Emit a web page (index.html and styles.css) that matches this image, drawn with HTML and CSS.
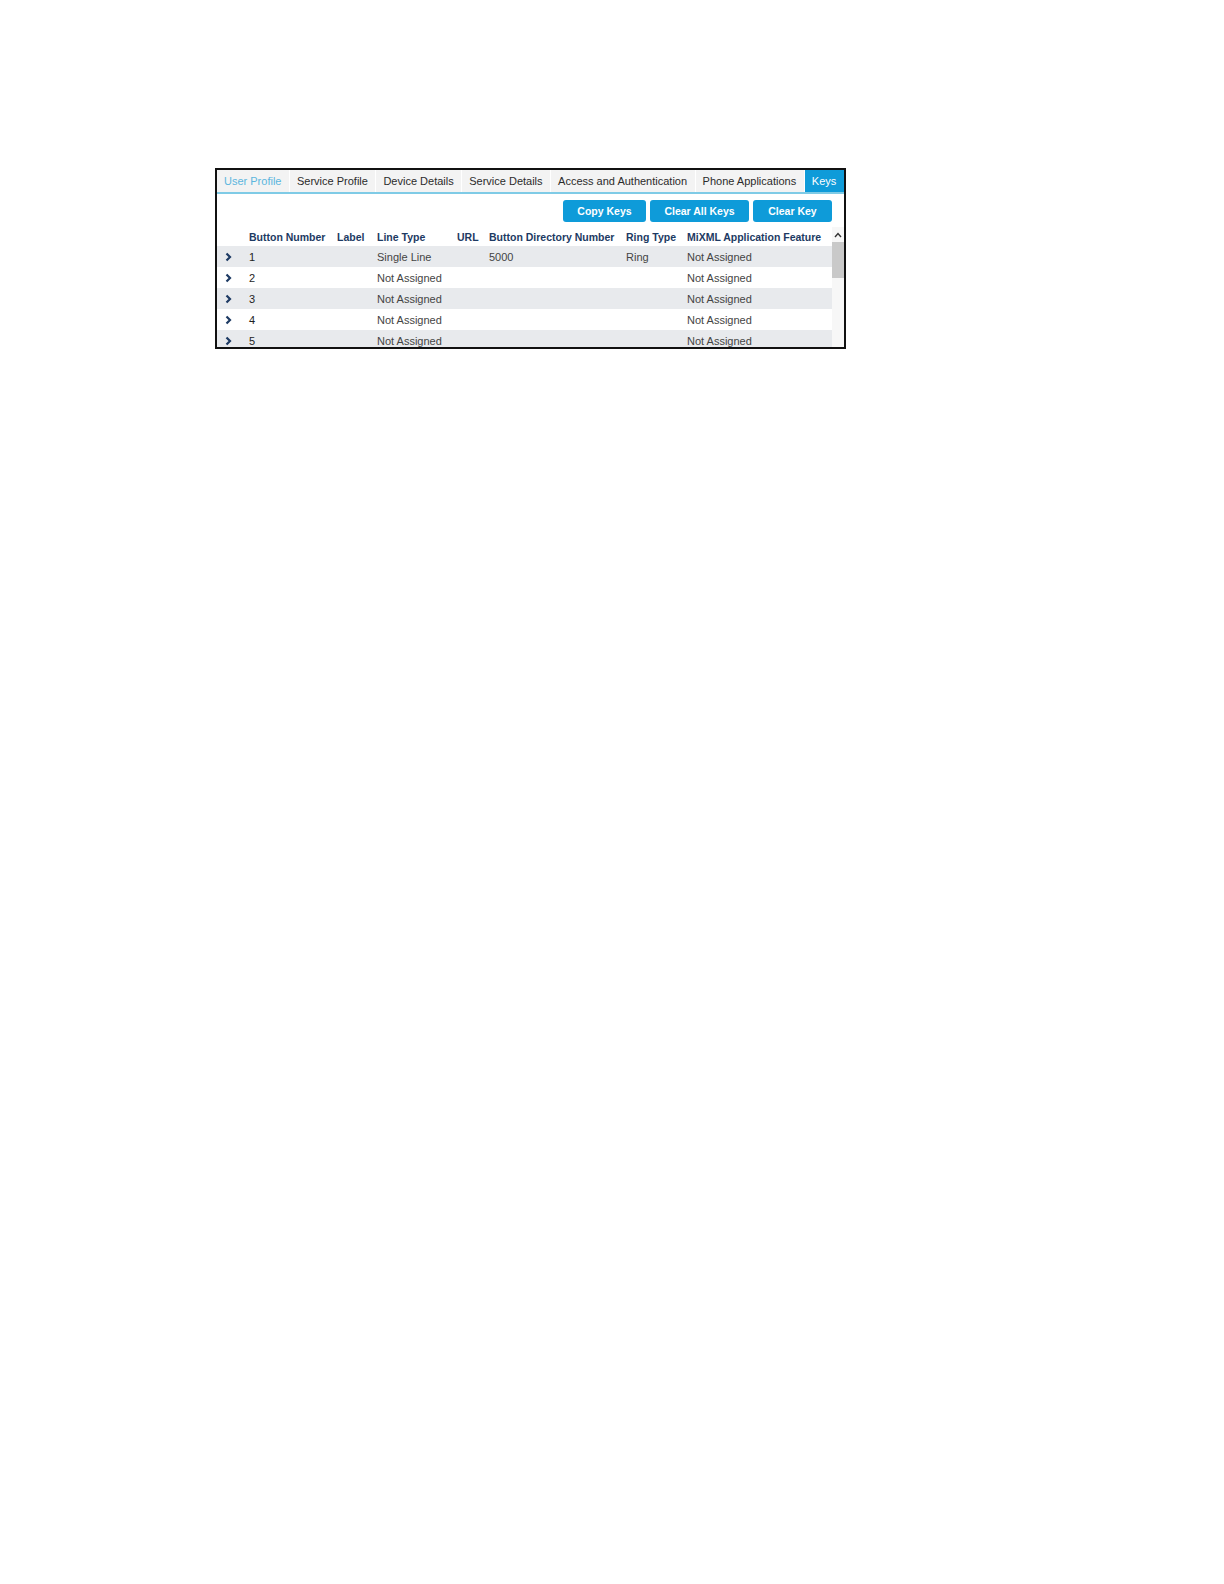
FILE: index.html
```html
<!DOCTYPE html>
<html lang="en">
<head>
<meta charset="utf-8">
<title>Keys</title>
<link rel="stylesheet" href="styles.css">
</head>
<body>
<div class="page">
  <div class="frame">
    <div class="tabs">
      <div class="tab tab-muted">User Profile</div>
      <div class="tab">Service Profile</div>
      <div class="tab">Device Details</div>
      <div class="tab">Service Details</div>
      <div class="tab">Access and Authentication</div>
      <div class="tab">Phone Applications</div>
      <div class="tab tab-active">Keys</div>
    </div>
    <div class="toolbar">
      <button class="btn">Copy Keys</button>
      <button class="btn">Clear All Keys</button>
      <button class="btn">Clear Key</button>
    </div>
    <div class="grid-wrap">
      <div class="grid">
        <div class="row head">
          <div></div>
          <div>Button Number</div>
          <div>Label</div>
          <div>Line Type</div>
          <div>URL</div>
          <div>Button Directory Number</div>
          <div>Ring Type</div>
          <div>MiXML Application Feature</div>
        </div>
        <div class="row odd">
          <div class="chev"><svg width="7" height="10" viewBox="0 0 7 10"><path d="M1.5 1.5 L5 5 L1.5 8.5" fill="none" stroke="#1d3a63" stroke-width="2.2"/></svg></div>
          <div class="num">1</div><div></div><div>Single Line</div><div></div><div>5000</div><div>Ring</div><div>Not Assigned</div>
        </div>
        <div class="row">
          <div class="chev"><svg width="7" height="10" viewBox="0 0 7 10"><path d="M1.5 1.5 L5 5 L1.5 8.5" fill="none" stroke="#1d3a63" stroke-width="2.2"/></svg></div>
          <div class="num">2</div><div></div><div>Not Assigned</div><div></div><div></div><div></div><div>Not Assigned</div>
        </div>
        <div class="row odd">
          <div class="chev"><svg width="7" height="10" viewBox="0 0 7 10"><path d="M1.5 1.5 L5 5 L1.5 8.5" fill="none" stroke="#1d3a63" stroke-width="2.2"/></svg></div>
          <div class="num">3</div><div></div><div>Not Assigned</div><div></div><div></div><div></div><div>Not Assigned</div>
        </div>
        <div class="row">
          <div class="chev"><svg width="7" height="10" viewBox="0 0 7 10"><path d="M1.5 1.5 L5 5 L1.5 8.5" fill="none" stroke="#1d3a63" stroke-width="2.2"/></svg></div>
          <div class="num">4</div><div></div><div>Not Assigned</div><div></div><div></div><div></div><div>Not Assigned</div>
        </div>
        <div class="row odd">
          <div class="chev"><svg width="7" height="10" viewBox="0 0 7 10"><path d="M1.5 1.5 L5 5 L1.5 8.5" fill="none" stroke="#1d3a63" stroke-width="2.2"/></svg></div>
          <div class="num">5</div><div></div><div>Not Assigned</div><div></div><div></div><div></div><div>Not Assigned</div>
        </div>
      </div>
      <div class="scrollbar">
        <div class="sb-arrow"><svg width="8" height="6" viewBox="0 0 8 6"><path d="M1 5 L4 1.5 L7 5" fill="none" stroke="#333" stroke-width="1.4"/></svg></div>
        <div class="sb-thumb"></div>
      </div>
    </div>
  </div>
</div>
</body>
</html>
```

FILE: styles.css
```css
html, body {
  margin: 0;
  padding: 0;
  background: #ffffff;
}

body {
  font-family: "Liberation Sans", Arial, sans-serif;
  font-size: 11px;
  color: #333;
}

.page {
  padding: 168px 0 0 215px;
}

.frame {
  box-sizing: border-box;
  width: 631px;
  height: 181px;
  border: 2px solid #111;
  background: #fff;
  display: flex;
  flex-direction: column;
  overflow: hidden;
}

.tabs {
  display: flex;
  height: 22px;
  background: #fff;
  border-bottom: 2px solid #7fcbe6;
  gap: 1px;
}

.tab {
  display: flex;
  align-items: center;
  padding: 0 7.5px 0 7px;
  background: #f3f3f3;
  color: #2b2b2b;
  white-space: nowrap;
}

.tab-muted {
  color: #5cb6de;
}

.tab-active {
  background: #0e9bd9;
  color: #fff;
  flex: 1;
  justify-content: center;
}

.toolbar {
  display: flex;
  justify-content: flex-end;
  gap: 4px;
  padding: 6px 12px 5px 0;
}

.btn {
  height: 22px;
  border: none;
  border-radius: 3px;
  background: #0e9bd9;
  color: #fff;
  font-family: "Liberation Sans", Arial, sans-serif;
  font-size: 10.5px;
  font-weight: bold;
  padding: 0;
  white-space: nowrap;
}

.btn:nth-child(1) { width: 83px; }
.btn:nth-child(2) { width: 99px; }
.btn:nth-child(3) { width: 79px; }

.grid-wrap {
  display: flex;
  flex: 1;
  min-height: 0;
}

.grid {
  width: 615px;
  display: flex;
  flex-direction: column;
}

.row {
  display: grid;
  grid-template-columns: 32px 88px 40px 80px 32px 137px 61px 145px;
  height: 21px;
  align-items: center;
  flex-shrink: 0;
  color: #444;
}

.row.head {
  box-sizing: border-box;
  height: 19px;
  padding-top: 1px;
  font-weight: bold;
  font-size: 10.5px;
  color: #1d3a63;
}

.row.odd {
  background: #e8eaed;
}

.row > div {
  white-space: nowrap;
}

.chev {
  padding-left: 8px;
  display: flex;
  align-items: center;
}

.num {
  color: #1e1e1e;
}

.scrollbar {
  width: 12px;
  background: #f7f7f7;
  display: flex;
  flex-direction: column;
  align-items: center;
}

.sb-arrow {
  height: 15px;
  display: flex;
  align-items: center;
  justify-content: center;
}

.sb-thumb {
  width: 12px;
  height: 36px;
  background: #c9c9c9;
}
```
